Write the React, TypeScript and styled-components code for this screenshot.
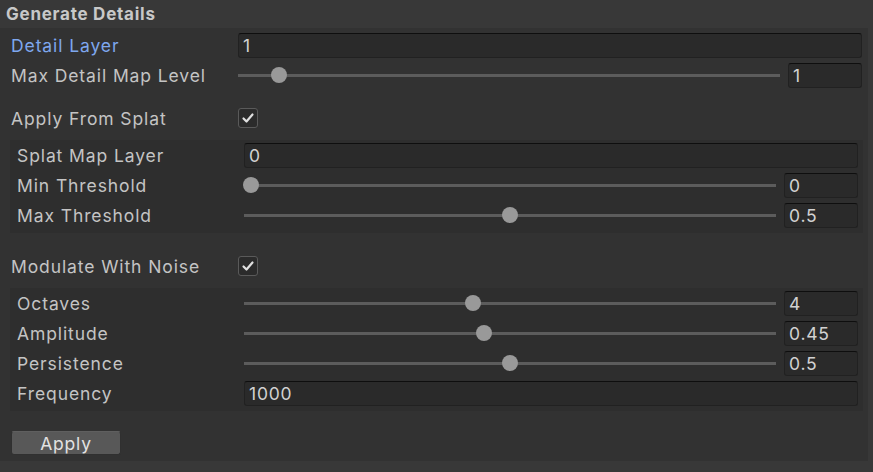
import * as React from "react";
import styled, { createGlobalStyle } from "styled-components";

const GlobalStyle = createGlobalStyle`
    html, body {
        margin: 0;
        padding: 0;
        background: #383838;
    }
    body {
        font-family: Inter, "Noto Sans", sans-serif;
        color: #c4c4c4;
    }
`;

const Page = styled.div`
    width: 873px;
    height: 472px;
    background: #383838;
    overflow: hidden;
`;

const Header = styled.div`
    height: 28px;
    padding-left: 6px;
    display: flex;
    align-items: center;
    font-size: 17px;
    font-weight: 700;
    color: #c8c8c8;
    letter-spacing: 0.75px;
`;

const Panel = styled.div`
    width: 868px;
    box-sizing: border-box;
    background: #323232;
    padding: 2px 6px 6px 11px;
    display: flex;
    flex-direction: column;
`;

const Group = styled.div<{ $top: number }>`
    margin: ${(p) => p.$top}px -1px 0 -1px;
    padding: 0 5px 3px 7px;
    background: #2e2e2e;
    display: flex;
    flex-direction: column;
`;

const Row = styled.div<{ $top?: number }>`
    height: 30px;
    margin-top: ${(p) => p.$top || 0}px;
    display: flex;
    align-items: center;
`;

const Label = styled.div<{ $active?: boolean }>`
    width: 227px;
    flex: none;
    font-size: 17.5px;
    letter-spacing: 0.9px;
    color: ${(p) => (p.$active ? "#7ea7ee" : "#c4c4c4")};
    white-space: nowrap;
`;

const Field = styled.div<{ $width?: number }>`
    height: 25px;
    box-sizing: border-box;
    ${(p) => (p.$width ? `width: ${p.$width}px; flex: none;` : "flex: 1;")}
    background: #2a2a2a;
    border: 1px solid #212121;
    border-top-color: #0e0e0e;
    border-radius: 3px;
    display: flex;
    align-items: center;
    padding-left: 4px;
    font-size: 17.5px;
    letter-spacing: 0.8px;
    color: #d2d2d2;
`;

const SliderWrap = styled.div`
    flex: 1;
    display: flex;
    align-items: center;
    gap: 8px;
`;

const Track = styled.div`
    flex: 1;
    height: 3px;
    background: #5c5c5c;
    position: relative;
`;

const Thumb = styled.div`
    position: absolute;
    top: 50%;
    width: 16px;
    height: 16px;
    margin: -8px 0 0 -8px;
    border-radius: 50%;
    background: #999999;
`;

const ThumbRange = styled.div`
    position: absolute;
    left: 7px;
    right: 7px;
    top: 0;
    bottom: 0;
`;

const Box = styled.div`
    width: 20px;
    height: 20px;
    box-sizing: border-box;
    background: #2b2b2b;
    border: 1px solid #5a5a5a;
    border-radius: 3px;
    display: flex;
    align-items: center;
    justify-content: center;
`;

const Button = styled.button`
    margin-top: 20px;
    width: 110px;
    height: 24px;
    background: #585858;
    border: 1px solid #303030;
    border-top-color: #5f5f5f;
    border-radius: 3px;
    color: #e2e2e2;
    font-family: Inter, "Noto Sans", sans-serif;
    font-size: 17.5px;
    letter-spacing: 0.8px;
    padding: 0;
`;

function Slider({ pct, value }: { pct: number; value: string }) {
    return (
        <SliderWrap>
            <Track>
                <ThumbRange>
                    <Thumb style={{ left: `${pct * 100}%` }} />
                </ThumbRange>
            </Track>
            <Field $width={74}>{value}</Field>
        </SliderWrap>
    );
}

function Check() {
    return (
        <Box>
            <svg width="14" height="14" viewBox="0 0 14 14">
                <polyline points="2.5,7.5 5.5,10.5 11.5,3.5" fill="none" stroke="#e0e0e0" strokeWidth="2.2" strokeLinecap="round" strokeLinejoin="round" />
            </svg>
        </Box>
    );
}

export default function App() {
    return (
        <Page>
            <GlobalStyle />
            <Header>Generate Details</Header>
            <Panel>
                <Row>
                    <Label $active>Detail Layer</Label>
                    <Field>1</Field>
                </Row>
                <Row>
                    <Label>Max Detail Map Level</Label>
                    <Slider pct={0.064} value="1" />
                </Row>

                <Row $top={13}>
                    <Label>Apply From Splat</Label>
                    <Check />
                </Row>
                <Group $top={7}>
                    <Row>
                        <Label>Splat Map Layer</Label>
                        <Field>0</Field>
                    </Row>
                    <Row>
                        <Label>Min Threshold</Label>
                        <Slider pct={0} value="0" />
                    </Row>
                    <Row>
                        <Label>Max Threshold</Label>
                        <Slider pct={0.5} value="0.5" />
                    </Row>
                </Group>

                <Row $top={18}>
                    <Label>Modulate With Noise</Label>
                    <Check />
                </Row>
                <Group $top={7}>
                    <Row>
                        <Label>Octaves</Label>
                        <Slider pct={3 / 7} value="4" />
                    </Row>
                    <Row>
                        <Label>Amplitude</Label>
                        <Slider pct={0.45} value="0.45" />
                    </Row>
                    <Row>
                        <Label>Persistence</Label>
                        <Slider pct={0.5} value="0.5" />
                    </Row>
                    <Row>
                        <Label>Frequency</Label>
                        <Field>1000</Field>
                    </Row>
                </Group>

                <Button>Apply</Button>
            </Panel>
        </Page>
    );
}
